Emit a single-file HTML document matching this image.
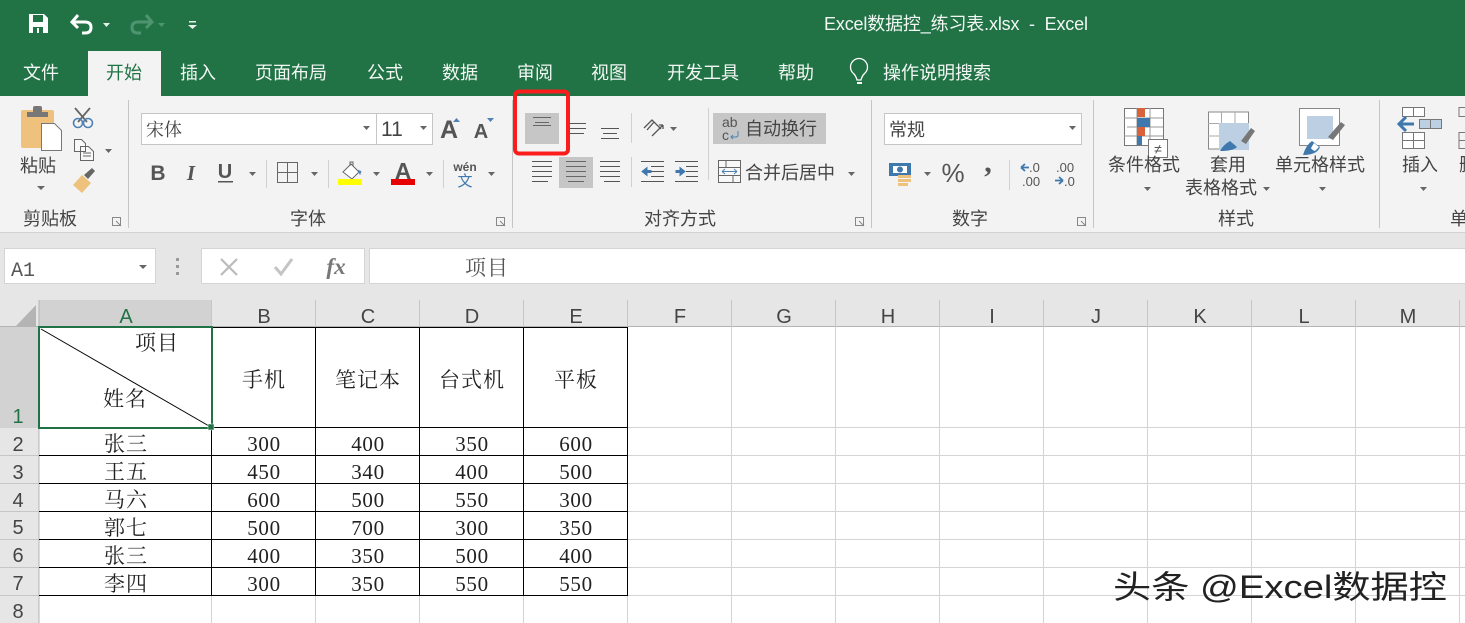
<!DOCTYPE html>
<html><head><meta charset="utf-8"><style>
html,body{margin:0;padding:0;background:#fff;width:1465px;height:623px;overflow:hidden}
svg{display:block}
text{font-family:"Liberation Sans","Noto Sans CJK SC",sans-serif;white-space:pre}
.u{font-size:18px;fill:#444}
.t{font-size:18px;fill:#f2f7f4;text-anchor:middle}
.c{font-size:18px;fill:#444;text-anchor:middle}
.h{font-size:20px;fill:#444;text-anchor:middle}
.n{font-family:"Liberation Serif","Noto Serif CJK SC",serif;font-size:21px;fill:#222;text-anchor:middle;letter-spacing:.7px}
.s{font-family:"Noto Serif CJK SC",serif;font-size:21px;fill:#222;text-anchor:middle;letter-spacing:1px}
.gl{stroke:#d4d4d4;stroke-width:1}
.bl{stroke:#000;stroke-width:1}
.al{stroke:#555;stroke-width:1;fill:none}
.tri{fill:#666}
</style></head><body>
<svg width="1465" height="623" viewBox="0 0 1465 623" xmlns="http://www.w3.org/2000/svg">
<rect width="1465" height="623" fill="#fff"/>
<!-- title bar -->
<rect width="1465" height="96" fill="#217346"/>
<rect x="88" y="51" width="73" height="45" fill="#f3f3f3"/>
<!-- QAT -->
<path d="M29 14h15l4 4v15h-19z" fill="#fff"/><rect x="33" y="15" width="10" height="7" fill="#217346"/><rect x="33" y="27" width="10" height="6" fill="#217346"/><rect x="37" y="28" width="2" height="5" fill="#fff"/>
<path d="M78 15l-6 7 6 6M73 22h12q6 0 6 5.500t-6 5.500h-3" fill="none" stroke="#fff" stroke-width="3"/>
<path d="M103 23h7l-3.500 4z" fill="#e8f0eb"/>
<path d="M146 15l6 7-6 6M150 22h-12q-6 0-6 5.500t6 5.500h3" fill="none" stroke="#4f9470" stroke-width="3"/>
<path d="M158 23h7l-3.500 4z" fill="#4f9470"/>
<rect x="189" y="21" width="7" height="1.500" fill="#e8f0eb"/><path d="M188 25h9l-4.500 4z" fill="#e8f0eb"/>
<text x="824" y="30" style="font-size:18px;fill:#f2f7f4" textLength="264" lengthAdjust="spacing">Excel数据控_练习表.xlsx  -  Excel</text>
<!-- tabs -->
<text x="41" y="79" class="t">文件</text>
<text x="124" y="79" class="t" style="fill:#217346">开始</text>
<text x="198" y="79" class="t">插入</text>
<text x="291" y="79" class="t">页面布局</text>
<text x="385" y="79" class="t">公式</text>
<text x="460" y="79" class="t">数据</text>
<text x="535" y="79" class="t">审阅</text>
<text x="609" y="79" class="t">视图</text>
<text x="703" y="79" class="t">开发工具</text>
<text x="796" y="79" class="t">帮助</text>
<path d="M857 80q-1-4-3.500-6.500a8.500 8.500 0 1 1 11 0q-2.500 2.500-3.500 6.500z" fill="none" stroke="#fff" stroke-width="1.300"/><rect x="857" y="82" width="5" height="2" fill="#fff"/>
<text x="937" y="79" class="t">操作说明搜索</text>
<!-- ribbon -->
<rect y="96" width="1465" height="136" fill="#f3f3f3"/>
<rect y="232" width="1465" height="68" fill="#e6e6e6"/>
<rect y="232" width="1465" height="1" fill="#d2d2d2"/>
<g fill="#c6c6c6"><rect x="128" y="100" width="1" height="128"/><rect x="512" y="100" width="1" height="128"/><rect x="871" y="100" width="1" height="128"/><rect x="1093" y="100" width="1" height="128"/><rect x="1379" y="100" width="1" height="128"/></g>
<!-- clipboard -->
<rect x="21" y="110" width="33" height="38" rx="2" fill="#eec27c"/>
<rect x="27" y="112" width="21" height="5" fill="#777"/><rect x="33" y="106" width="9" height="7" rx="2" fill="#777"/>
<path d="M41.500 123.500h13l7 7v20h-20z" fill="#fff" stroke="#777"/>
<text x="38" y="172" class="c">粘贴</text>
<path class="tri" d="M37 186h8l-4 4z"/>
<path d="M75 108l12 14M90 108l-12 14" stroke="#666" stroke-width="1.800"/>
<circle cx="78" cy="123" r="4.500" fill="none" stroke="#4e82b4" stroke-width="1.600"/><circle cx="88" cy="123" r="4.500" fill="none" stroke="#4e82b4" stroke-width="1.600"/>
<path d="M74.500 139.500h7l4 4v8h-11zM80.500 146.500h8l5 5v9h-13z" fill="#f8f8f8" stroke="#666"/>
<path d="M83 153h8M83 156h8" stroke="#666"/>
<path class="tri" d="M105 149h7l-3.500 4z"/>
<path d="M73 185l9-10 9 8-9 10z" fill="#eec27c"/><path d="M84 175l8-7 3 3-7 8z" fill="#666"/>
<text x="50" y="225" class="c">剪贴板</text>
<path d="M112.500 217.500h8v8h-8z M116 221l5 5" fill="none" stroke="#888"/>
<!-- font -->
<rect x="141.500" y="113.500" width="291" height="31" fill="#fff" stroke="#c6c6c6"/>
<rect x="376" y="114" width="1" height="30" fill="#c6c6c6"/>
<text x="146" y="136" style="font-size:18px;fill:#444;font-family:'Noto Serif CJK SC',serif">宋体</text>
<path class="tri" d="M363 126h7l-3.500 4z"/>
<text x="381" y="136" style="font-size:21px;fill:#444">11</text>
<path class="tri" d="M420 126h7l-3.500 4z"/>
<text x="449" y="138" style="font-size:25px;font-weight:bold;fill:#555;text-anchor:middle">A</text>
<path d="M453 122l3.500-4 3.500 4z" fill="#4e82b4"/>
<text x="481" y="138" style="font-size:20px;font-weight:bold;fill:#555;text-anchor:middle">A</text>
<path d="M487 118h7l-3.500 4z" fill="#4e82b4"/>
<text x="158" y="180" style="font-size:21px;font-weight:bold;fill:#555;text-anchor:middle">B</text>
<text x="191" y="180" style="font-size:21px;font-style:italic;font-weight:bold;fill:#555;text-anchor:middle;font-family:'Liberation Serif',serif">I</text>
<text x="225" y="178" style="font-size:20px;font-weight:bold;fill:#555;text-anchor:middle">U</text><rect x="218" y="181" width="15" height="1.500" fill="#555"/>
<path class="tri" d="M249 172h7l-3.500 4z"/>
<rect x="266" y="160" width="1" height="28" fill="#d0d0d0"/>
<path d="M277.500 162.500h20v20h-20zM287.500 162.500v20M277.500 172.500h20" fill="none" stroke="#666"/>
<path class="tri" d="M311 172h7l-3.500 4z"/>
<rect x="328" y="160" width="1" height="28" fill="#d0d0d0"/>
<path d="M343 172l8-8 8 8-7 7z" fill="#fff" stroke="#666"/><path d="M350 166v-4h3v4" fill="none" stroke="#666"/><path d="M358 170l2 4 1-3" fill="#4e82b4" stroke="#4e82b4"/>
<rect x="338" y="179" width="24" height="6" fill="#ffff00"/>
<path class="tri" d="M373 172h7l-3.500 4z"/>
<text x="403" y="179" style="font-size:23px;font-weight:bold;fill:#555;text-anchor:middle">A</text>
<rect x="391" y="179" width="24" height="6" fill="#e60000"/>
<path class="tri" d="M426 172h7l-3.500 4z"/>
<rect x="443" y="160" width="1" height="28" fill="#d0d0d0"/>
<text x="465" y="171" style="font-size:12px;font-weight:bold;fill:#555;text-anchor:middle">wén</text>
<text x="465" y="186" style="font-size:15px;fill:#3f78ad;text-anchor:middle">文</text>
<path class="tri" d="M488 172h7l-3.500 4z"/>
<text x="308" y="225" class="c">字体</text>
<path d="M496.500 217.500h8v8h-8z M500 221l5 5" fill="none" stroke="#888"/>
<!-- alignment -->
<rect x="525" y="113" width="34" height="31" fill="#c6c6c6"/>
<path class="al" d="M533 117.500h18M535 122.500h14M533 125.500h18" style="stroke:#666"/>
<path class="al" d="M570 123.500h16M570 128.500h16M570 133.500h14"/>
<path class="al" d="M601 128.500h18M603 133.500h14M601 138.500h18"/>
<rect x="631" y="113" width="1" height="30" fill="#d0d0d0"/>
<path d="M644 128l8-8 9 9M647 130l7-8M652 136l11-11M663 125h-4M663 125v4" fill="none" stroke="#555" stroke-width="1.300"/>
<path class="tri" d="M670 127h7l-3.500 4z"/>
<path class="al" d="M532 161.500h20M532 166.500h20M532 171.500h20M532 176.500h20M532 181.500h16"/>
<rect x="559" y="157" width="34" height="31" fill="#c6c6c6"/>
<path class="al" d="M566 161.500h20M566 166.500h20M566 171.500h20M566 176.500h20M568 181.500h16" style="stroke:#666"/>
<path class="al" d="M600 161.500h20M600 166.500h20M600 171.500h20M600 176.500h20M604 181.500h16"/>
<rect x="631" y="157" width="1" height="30" fill="#d0d0d0"/>
<path class="al" d="M641 161.500h23M651 166.500h13M651 171.500h13M651 176.500h13M641 181.500h23"/>
<path d="M642 171.500l5-4v3h4v2h-4v3z" fill="#3f78ad" stroke="#3f78ad"/>
<path class="al" d="M675 161.500h23M686 166.500h12M686 171.500h12M686 176.500h12M675 181.500h23"/>
<path d="M685 171.500l-5-4v3h-4v2h4v3z" fill="#3f78ad" stroke="#3f78ad"/>
<rect x="708" y="108" width="1" height="72" fill="#d0d0d0"/>
<rect x="713" y="113" width="113" height="31" fill="#c6c6c6"/>
<text x="722" y="127" style="font-size:14px;fill:#555">ab</text>
<text x="722" y="140" style="font-size:14px;fill:#555">c</text>
<path d="M738 131v4q0 2-2 2h-5M733 135l-2 2 2 2" fill="none" stroke="#4e82b4"/>
<text x="745" y="135" class="u">自动换行</text>
<path d="M718.500 160.500h22v22h-22zM718.500 167.500h22M718.500 175.500h22M726 160.500v7M733 175.500v7" fill="#f8f8f8" stroke="#666"/>
<path d="M722 171.500h15M722 171.500l3-2.500M722 171.500l3 2.500M737 171.500l-3-2.500M737 171.500l-3 2.500" fill="none" stroke="#4e82b4"/>
<text x="745" y="179" class="u">合并后居中</text>
<path class="tri" d="M848 172h7l-3.500 4z"/>
<text x="680" y="225" class="c">对齐方式</text>
<path d="M855.500 217.500h8v8h-8z M859 221l5 5" fill="none" stroke="#888"/>
<!-- red box -->
<rect x="515" y="91.500" width="53" height="62" rx="4" fill="none" stroke="#fb1c1c" stroke-width="4"/>
<!-- number -->
<rect x="884.500" y="113.500" width="197" height="31" fill="#fff" stroke="#c6c6c6"/>
<text x="889" y="136" class="u">常规</text>
<path class="tri" d="M1069 126h7l-3.500 4z"/>
<rect x="889" y="163" width="22" height="13" fill="#3f78ad"/><rect x="893" y="166" width="14" height="7" fill="#fff"/><circle cx="900" cy="169.500" r="3" fill="#3f78ad"/>
<g fill="#eec27c"><rect x="898" y="175" width="13" height="3"/><rect x="898" y="179" width="13" height="3"/><rect x="898" y="183" width="10" height="3"/></g>
<path class="tri" d="M924 172h7l-3.500 4z"/>
<text x="953" y="182" style="font-size:26px;fill:#555;text-anchor:middle">%</text>
<text x="988" y="172" style="font-size:30px;font-weight:bold;fill:#555;text-anchor:middle;font-family:'Liberation Serif',serif">,</text>
<rect x="1009" y="160" width="1" height="30" fill="#d0d0d0"/>
<path d="M1021 167.500h8M1021 167.500l4-3.500M1021 167.500l4 3.500" stroke="#3f78ad" stroke-width="1.800" fill="none"/>
<text x="1029" y="172" style="font-size:13px;fill:#555">.0</text>
<text x="1022" y="186" style="font-size:13px;fill:#555">.00</text>
<text x="1056" y="172" style="font-size:13px;fill:#555">.00</text>
<path d="M1055 180.500h8M1063 180.500l-4-3.500M1063 180.500l-4 3.500" stroke="#3f78ad" stroke-width="1.800" fill="none"/>
<text x="1064" y="186" style="font-size:13px;fill:#555">.0</text>
<text x="970" y="225" class="c">数字</text>
<path d="M1077.500 217.500h8v8h-8z M1081 221l5 5" fill="none" stroke="#888"/>
<!-- styles -->
<rect x="1124.500" y="108.500" width="39" height="37" fill="#fff" stroke="#777"/>
<path d="M1137 108v37M1150 108v37M1124 118h39M1127 127h36M1124 136h39" stroke="#999"/>
<rect x="1137" y="108" width="8" height="9" fill="#d9623a"/><rect x="1137" y="118" width="13" height="9" fill="#3f78ad"/><rect x="1137" y="127" width="8" height="9" fill="#d9623a"/><rect x="1137" y="136" width="5" height="9" fill="#3f78ad"/>
<rect x="1148.500" y="139.500" width="19" height="18" fill="#fff" stroke="#777"/>
<text x="1158" y="154" style="font-size:14px;fill:#555;text-anchor:middle">≠</text>
<text x="1144" y="171" class="c">条件格式</text>
<path class="tri" d="M1144 187h7l-3.500 4z"/>
<rect x="1208.500" y="112" width="40" height="37" fill="#fff" stroke="#888"/>
<path d="M1208 123.500h14M1208 136h14M1221.500 112v37M1235 112v11" stroke="#aaa"/>
<rect x="1219" y="123" width="30" height="27" fill="#bdd0e3"/>
<path d="M1241 141l10-13 4 3-9 13z" fill="#777"/><path d="M1220 151q3-6 10-10l7 6q-4 4-17 4z" fill="#3f78ad"/>
<text x="1228" y="171" class="c">套用</text>
<text x="1221" y="194" class="c">表格格式</text>
<path class="tri" d="M1263 187h7l-3.500 4z"/>
<rect x="1299.500" y="108.500" width="40" height="37" fill="#fff" stroke="#888"/>
<rect x="1307" y="116" width="26" height="23" fill="#bdd0e3"/>
<path d="M1328 137l13-15 4 3-12 15z" fill="#777"/><path d="M1303 155q3-10 9-14l8 6q-3 8-17 8z" fill="#3f78ad"/>
<path d="M1314 143l5 4-4 4q-3-1-4-3z" fill="#fff"/>
<text x="1320" y="171" class="c">单元格样式</text>
<path class="tri" d="M1319 187h7l-3.500 4z"/>
<text x="1236" y="225" class="c">样式</text>
<!-- cells -->
<path d="M1402.500 107.500h22v9h-22zM1413.500 107.500v9M1402.500 132.500h22v16h-22zM1402.500 140.500h22M1413.500 132.500v16" fill="#fff" stroke="#777"/>
<rect x="1419.500" y="119.500" width="22" height="9" fill="#bdd0e3" stroke="#777"/><path d="M1430.500 119.500v9" stroke="#777"/>
<path d="M1400 124h14M1406 117l-7 7 7 7" fill="none" stroke="#3f78ad" stroke-width="3"/>
<text x="1420" y="171" class="c">插入</text>
<path class="tri" d="M1420 187h7l-3.500 4z"/>
<path d="M1465 107.500h-6v9h6M1465 132.500h-6v16h6M1459 140.500h6" fill="none" stroke="#777"/>
<text x="1459" y="171" class="c" style="text-anchor:start">删</text>
<text x="1450" y="225" class="c" style="text-anchor:start">单元格</text>
<!-- formula bar -->
<rect x="4.500" y="248.500" width="151" height="35" fill="#fff" stroke="#d4d4d4"/>
<text x="11" y="276" style="font-family:'Liberation Mono',monospace;font-size:20px;fill:#555">A1</text>
<path class="tri" d="M139 265h8l-4 4z"/>
<g fill="#999"><rect x="176" y="258" width="3" height="3"/><rect x="176" y="265" width="3" height="3"/><rect x="176" y="272" width="3" height="3"/></g>
<rect x="201.500" y="248.500" width="163" height="35" fill="#fff" stroke="#d4d4d4"/>
<path d="M221 259l16 16M237 259l-16 16" stroke="#bbb" stroke-width="2.200"/>
<path d="M275 267l6 7 11-15" fill="none" stroke="#c4c4c4" stroke-width="3"/>
<text x="336" y="274" style="font-family:'Liberation Serif',serif;font-size:23px;font-style:italic;font-weight:bold;fill:#777;text-anchor:middle">fx</text>
<rect x="369.500" y="248.500" width="1100" height="35" fill="#fff" stroke="#d4d4d4"/>
<text x="487" y="275" class="s" style="font-size:21px;fill:#555">项目</text>
<!-- headers -->
<rect y="300" width="1465" height="27" fill="#e6e6e6"/>
<rect y="327" width="39" height="296" fill="#e6e6e6"/>
<rect x="39" y="300" width="173" height="27" fill="#d2d2d2"/>
<rect y="327" width="39" height="101" fill="#d2d2d2"/>
<path d="M36 305v21h-20z" fill="#b4b4b4"/>
<rect y="326" width="1465" height="1" fill="#b4b4b4"/>
<rect x="38.500" y="300" width="1" height="323" fill="#b4b4b4"/>
<g fill="#c6c6c6"><rect x="315" y="300" width="1" height="27"/><rect x="419" y="300" width="1" height="27"/><rect x="523" y="300" width="1" height="27"/><rect x="627" y="300" width="1" height="27"/><rect x="731" y="300" width="1" height="27"/><rect x="835" y="300" width="1" height="27"/><rect x="939" y="300" width="1" height="27"/><rect x="1043" y="300" width="1" height="27"/><rect x="1147" y="300" width="1" height="27"/><rect x="1251" y="300" width="1" height="27"/><rect x="1355" y="300" width="1" height="27"/><rect x="1459" y="300" width="1" height="27"/><rect x="211" y="300" width="1" height="27"/>
<rect y="455" width="39" height="1"/><rect y="483" width="39" height="1"/><rect y="511" width="39" height="1"/><rect y="539" width="39" height="1"/><rect y="567" width="39" height="1"/><rect y="595" width="39" height="1"/></g>
<text x="126" y="323" class="h" style="fill:#217346">A</text>
<text x="264" y="323" class="h">B</text><text x="368" y="323" class="h">C</text><text x="472" y="323" class="h">D</text><text x="576" y="323" class="h">E</text><text x="680" y="323" class="h">F</text><text x="784" y="323" class="h">G</text><text x="888" y="323" class="h">H</text><text x="992" y="323" class="h">I</text><text x="1096" y="323" class="h">J</text><text x="1200" y="323" class="h">K</text><text x="1304" y="323" class="h">L</text><text x="1408" y="323" class="h">M</text>
<text x="18" y="423" class="h" style="fill:#217346">1</text>
<text x="18" y="451" class="h">2</text><text x="18" y="479" class="h">3</text><text x="18" y="507" class="h">4</text><text x="18" y="534" class="h">5</text><text x="18" y="562" class="h">6</text><text x="18" y="590" class="h">7</text><text x="18" y="618" class="h">8</text>
<!-- gridlines -->
<g class="gl">
<path d="M731.500 327v296M835.500 327v296M939.500 327v296M1043.500 327v296M1147.500 327v296M1251.500 327v296M1355.500 327v296M1459.500 327v296M211.500 596v27M315.500 596v27M419.500 596v27M523.500 596v27M627.500 596v27"/>
<path d="M628 427.500h837M628 455.500h837M628 483.500h837M628 511.500h837M628 539.500h837M628 567.500h837M628 595.500h837"/>
</g>
<!-- table borders -->
<g class="bl">
<path d="M211.500 327v269M315.500 327v269M419.500 327v269M523.500 327v269M627.500 327v269"/>
<path d="M39 427.500h589M39 455.500h589M39 483.500h589M39 511.500h589M39 539.500h589M39 567.500h589M39 595.500h589M212 327.500h416"/>
</g>
<path d="M41 329L209 426" stroke="#000" stroke-width="1"/>
<rect x="39" y="327" width="173" height="101" fill="none" stroke="#217346" stroke-width="2"/>
<rect x="208" y="424" width="6" height="6" fill="#217346" stroke="#fff" stroke-width=".5"/>
<!-- data -->
<text x="157" y="350" class="s">项目</text>
<text x="125" y="406" class="s">姓名</text>
<text x="264" y="387" class="s">手机</text><text x="368" y="387" class="s">笔记本</text><text x="472" y="387" class="s">台式机</text><text x="576" y="387" class="s">平板</text>
<text x="126" y="451" class="s">张三</text><text x="264" y="451" class="n">300</text><text x="368" y="451" class="n">400</text><text x="472" y="451" class="n">350</text><text x="576" y="451" class="n">600</text>
<text x="126" y="479" class="s">王五</text><text x="264" y="479" class="n">450</text><text x="368" y="479" class="n">340</text><text x="472" y="479" class="n">400</text><text x="576" y="479" class="n">500</text>
<text x="126" y="507" class="s">马六</text><text x="264" y="507" class="n">600</text><text x="368" y="507" class="n">500</text><text x="472" y="507" class="n">550</text><text x="576" y="507" class="n">300</text>
<text x="126" y="535" class="s">郭七</text><text x="264" y="535" class="n">500</text><text x="368" y="535" class="n">700</text><text x="472" y="535" class="n">300</text><text x="576" y="535" class="n">350</text>
<text x="126" y="563" class="s">张三</text><text x="264" y="563" class="n">400</text><text x="368" y="563" class="n">350</text><text x="472" y="563" class="n">500</text><text x="576" y="563" class="n">400</text>
<text x="126" y="591" class="s">李四</text><text x="264" y="591" class="n">300</text><text x="368" y="591" class="n">350</text><text x="472" y="591" class="n">550</text><text x="576" y="591" class="n">550</text>
<!-- watermark -->
<text x="1113" y="598" style="font-size:32px;fill:#222" textLength="334" lengthAdjust="spacingAndGlyphs">头条 @Excel数据控</text>
</svg>
</body></html>
